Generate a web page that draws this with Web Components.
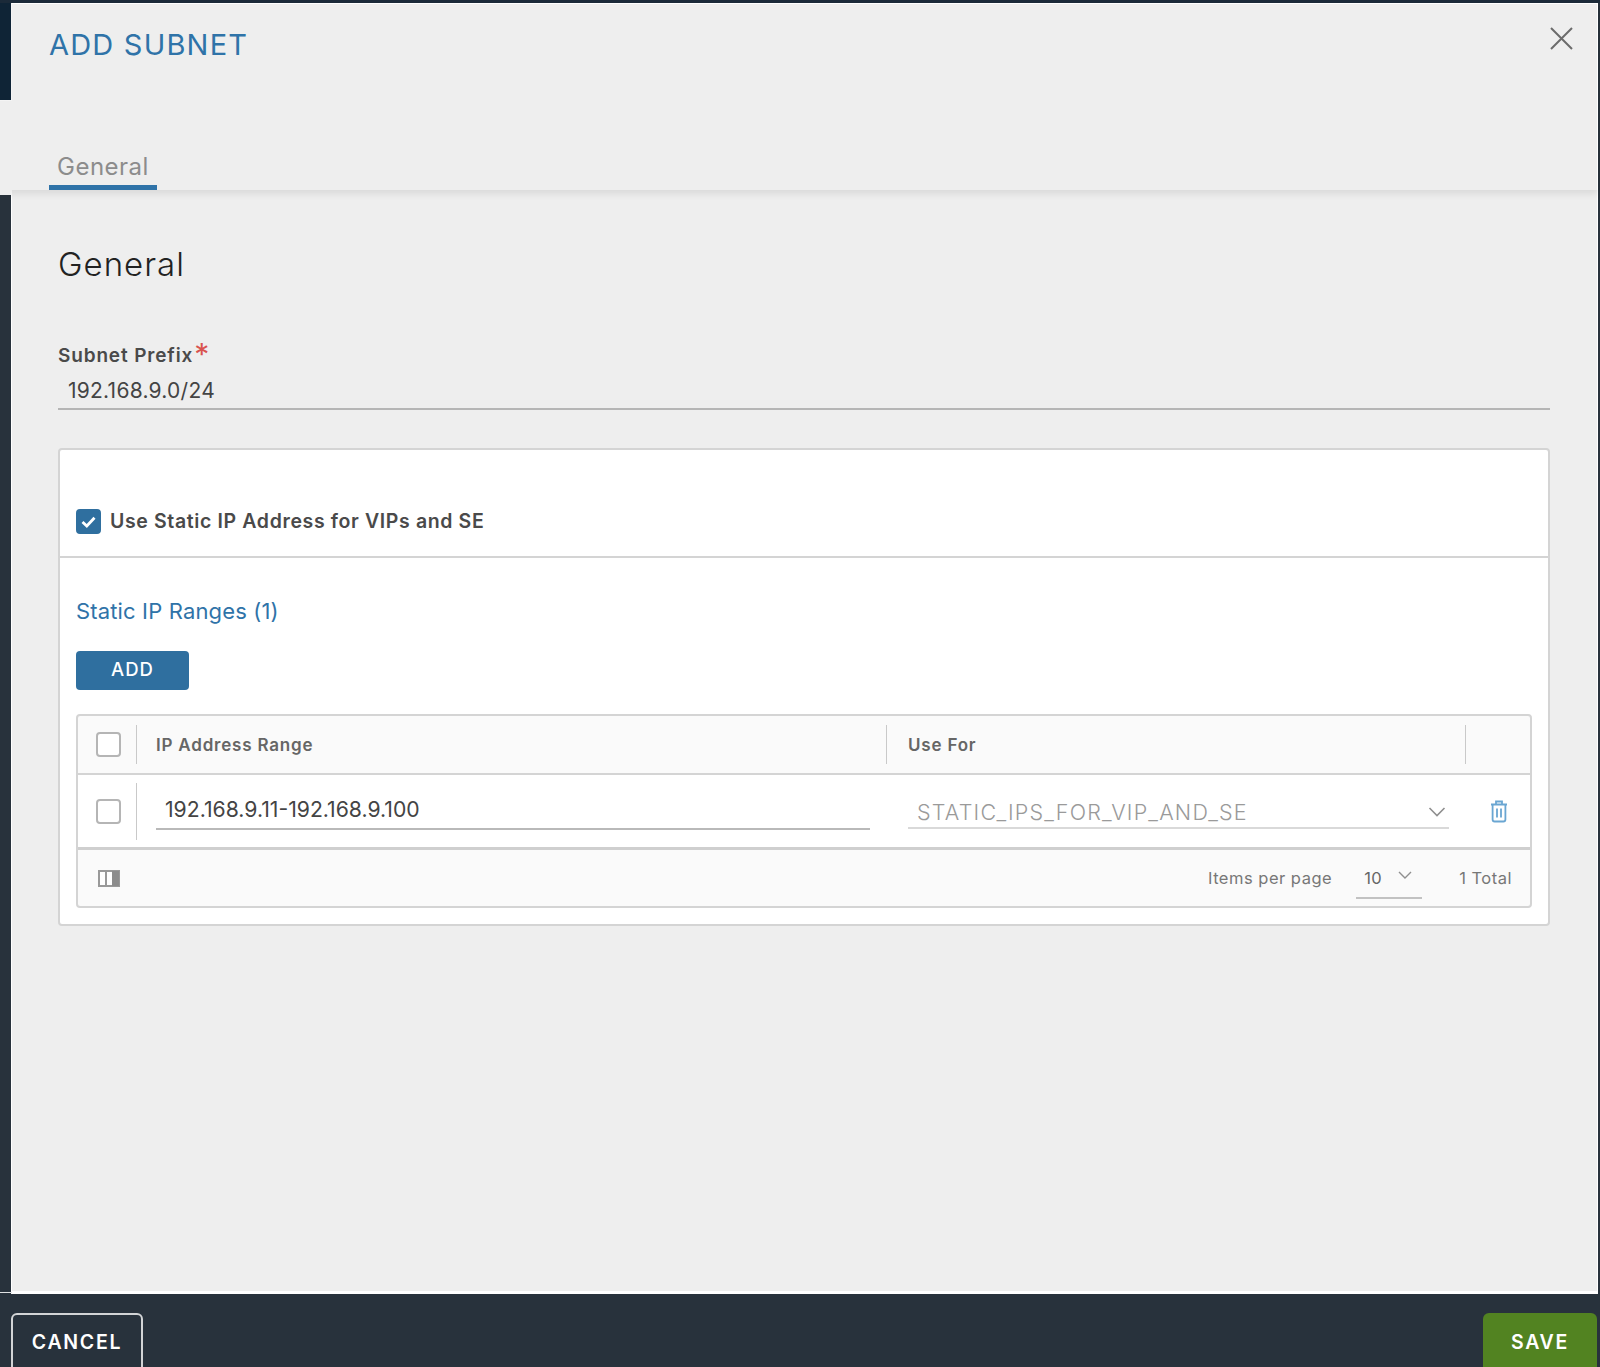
<!DOCTYPE html>
<html>
<head>
<meta charset="utf-8">
<title>Add Subnet</title>
<style>
  html, body { margin: 0; padding: 0; height: 100%; }
  body { font-family: "Inter", "Noto Sans", "Liberation Sans", sans-serif; background: #28323c; overflow: hidden; }
</style>
</head>
<body>
<subnet-modal></subnet-modal>

<script>
class ModalHeader extends HTMLElement {
  constructor() {
    super();
    let shadowRoot = this.attachShadow({mode: 'open'});
    shadowRoot.innerHTML = `
    <style>
      :host { display: block; position: relative; box-sizing: border-box; background: #eee; height: 187px; margin-right: 2px; z-index: 2;
        border-top: 1px solid #fff; border-right: 1px solid #fff;
        box-shadow: 0 3px 8px rgba(0,0,0,.10); font-family: "Inter", "Noto Sans", sans-serif; }
      .rail { position: absolute; left: 0; top: -1px; width: 11px; height: 97px; background: #0f2436; border-right: 1px solid #f4f4f4; border-bottom: 1px solid #f4f4f4; }
      .strip { position: absolute; left: 0; top: 100%; width: 11px; height: 5px; background: #eee; }
      .inner { display: flex; flex-direction: column; height: 100%; box-sizing: border-box; padding: 23px 0 0 49px; }
      .top { display: flex; justify-content: space-between; align-items: flex-start; height: 124px; flex: none; }
      h1 { margin: 0; font-size: 29px; line-height: 36px; font-weight: 400; color: #2f73a8; letter-spacing: 1.2px; }
      .close { margin: 0 24px 0 0; width: 24px; height: 24px; position: relative; top: -1px; }
      .tab { align-self: flex-start; font-size: 24px; line-height: 32px; color: #8c8c8c; letter-spacing: .5px; padding: 0 8px 2px; border-bottom: 5px solid #2f73a8; }
    </style>
    <div class="rail"></div>
    <div class="strip"></div>
    <div class="inner">
      <div class="top">
        <h1>ADD SUBNET</h1>
        <svg class="close" viewBox="0 0 24 24"><path d="M2 2 L23 23 M23 2 L2 23" stroke="#6b6b6b" stroke-width="2" fill="none"/></svg>
      </div>
      <div class="tab">General</div>
    </div>
    `;
  }
}
customElements.define('modal-header', ModalHeader);

class CheckBox extends HTMLElement {
  constructor() {
    super();
    let shadowRoot = this.attachShadow({mode: 'open'});
    let on = this.hasAttribute('checked');
    shadowRoot.innerHTML = `
    <style>
      :host { display: block; width: 25px; height: 25px; flex: none; }
      .box { box-sizing: border-box; width: 25px; height: 25px; border-radius: 4px; display: flex; align-items: center; justify-content: center;
        border: 2px solid ${on ? '#2f6f9f' : '#b5b5b5'}; background: ${on ? '#2f6f9f' : '#fff'}; }
    </style>
    <div class="box">${on ? '<svg width="15" height="12" viewBox="0 0 15 12"><path d="M1.5 6 L5.8 10 L13.5 1.8" stroke="#fff" stroke-width="2.8" fill="none"/></svg>' : ''}</div>
    `;
  }
}
customElements.define('check-box', CheckBox);

class IpTable extends HTMLElement {
  constructor() {
    super();
    let shadowRoot = this.attachShadow({mode: 'open'});
    shadowRoot.innerHTML = `
    <style>
      :host { display: block; border: 2px solid #d4d4d4; border-radius: 4px; background: #fafafa; font-family: "Inter", "Noto Sans", sans-serif; }
      .row { display: grid; grid-template-columns: 58px 750px 579px 1fr; align-items: center; }
      .head { height: 57px; border-bottom: 2px solid #d4d4d4; font-size: 17px; font-weight: 600; color: #666; letter-spacing: .8px; }
      .body { height: 72px; background: #fff; border-bottom: 3px solid #cfcfcf; }
      .cell { height: 100%; display: flex; align-items: center; box-sizing: border-box; position: relative; }
      .chk { justify-content: center; padding-left: 3px; }
      .sep { border-left: 1px solid #c9c9c9; height: 39px; }
      .ipinput { margin-left: 19px; width: 714px; box-sizing: border-box; height: 37px; line-height: 32px; padding-left: 9px; font-size: 21.2px; color: #444; border-bottom: 2px solid #b9b9b9; }
      .select { margin-left: 22px; width: 541px; box-sizing: border-box; height: 36px; padding: 3px 3px 0 9px; display: flex; justify-content: space-between; align-items: center;
        border-bottom: 2px solid #d9d9d9; font-size: 21.5px; font-weight: 300; color: #9a9a9a; letter-spacing: 1.2px; }
      .foot { height: 56px; display: flex; align-items: center; justify-content: space-between; padding: 0 18px 0 20px; font-size: 16.5px; color: #777; letter-spacing: .5px; }
      .right { display: flex; align-items: center; }
      .pp { margin-left: 24px; width: 66px; height: 40px; box-sizing: border-box; border-bottom: 2px solid #c2c2c2; display: flex; align-items: center; justify-content: space-between; padding: 0 10px 0 8px; color: #666; margin-right: 37px; position: relative; top: 1px; }
    </style>
    <div class="row head">
      <div class="cell chk"><check-box></check-box></div>
      <div class="cell"><span class="sep"></span><span style="padding-left:19px">IP Address Range</span></div>
      <div class="cell"><span class="sep"></span><span style="padding-left:21px">Use For</span></div>
      <div class="cell"><span class="sep"></span></div>
    </div>
    <div class="row body">
      <div class="cell chk"><check-box></check-box></div>
      <div class="cell"><span class="sep" style="height:57px"></span><div class="ipinput">192.168.9.11-192.168.9.100</div></div>
      <div class="cell"><div class="select"><span>STATIC_IPS_FOR_VIP_AND_SE</span>
        <svg width="18" height="10" viewBox="0 0 18 10"><path d="M1.5 1 L9 8.5 L16.5 1" stroke="#8f8f8f" stroke-width="1.6" fill="none"/></svg></div></div>
      <div class="cell" style="justify-content:center;padding-left:2px">
        <svg width="18" height="23" viewBox="0 0 18 23" fill="none" stroke="#6aa6d2" stroke-width="1.8"><path d="M1 4.5 H17 M6 4.5 V1.5 H12 V4.5 M2.6 4.5 V19.5 Q2.6 21.5 4.6 21.5 H13.4 Q15.4 21.5 15.4 19.5 V4.5 M7 8.5 V17.5 M11 8.5 V17.5"/></svg>
      </div>
    </div>
    <div class="foot">
      <svg width="22" height="17" viewBox="0 0 22 17"><rect x="1" y="1" width="20" height="15" fill="#fff" stroke="#999" stroke-width="2"/><path d="M8 1 V16" stroke="#999" stroke-width="2"/><rect x="14" y="1" width="7" height="15" fill="#8c8c8c"/></svg>
      <div class="right"><span>Items per page</span>
        <div class="pp"><span>10</span><svg width="14" height="8" viewBox="0 0 14 8" style="position:relative;top:-3px"><path d="M1 1 L7 7 L13 1" stroke="#8f8f8f" stroke-width="1.4" fill="none"/></svg></div>
        <span>1 Total</span></div>
    </div>
    `;
  }
}
customElements.define('ip-table', IpTable);

class GeneralForm extends HTMLElement {
  constructor() {
    super();
    let shadowRoot = this.attachShadow({mode: 'open'});
    shadowRoot.innerHTML = `
    <style>
      :host { display: block; padding: 52px 47px 0 46px; font-family: "Inter", "Noto Sans", sans-serif; color: #444; }
      h2 { margin: 0; font-size: 33px; line-height: 44px; font-weight: 300; color: #222; letter-spacing: 1px; }
      label { display: block; margin-top: 57px; margin-bottom: 2px; font-size: 19px; line-height: 26px; font-weight: 600; color: #4a4a4a; letter-spacing: .85px; }
      label i { font-style: normal; color: #d9534f; font-size: 30px; font-weight: 400; line-height: 10px; position: relative; top: 3px; left: 1px; }
      .input { height: 39px; line-height: 40px; padding-left: 10px; font-size: 21px; color: #444; letter-spacing: .25px; border-bottom: 2px solid #b5b5b5; box-sizing: border-box; }
      .card { margin-top: 38px; background: #fff; border: 2px solid #d4d4d4; border-radius: 4px; }
      .check { height: 108px; box-sizing: border-box; border-bottom: 2px solid #d4d4d4; padding: 59px 16px 0; display: flex; align-items: flex-start; gap: 9px; font-size: 19.5px; font-weight: 600; color: #4a4a4a; line-height: 25px; letter-spacing: .63px; }
      .ranges { padding: 38px 16px 16px; }
      h3 { margin: 0; font-size: 22px; line-height: 30px; font-weight: 400; color: #2f73a8; letter-spacing: .15px; }
      .add { display: block; margin-top: 25px; width: 113px; height: 39px; border: 0; border-radius: 4px; background: #2f6f9f; color: #fff; font: 500 18.5px/36px "Inter", "Noto Sans", sans-serif; letter-spacing: 1px; padding: 0 0 3px; }
      ip-table { margin-top: 24px; }
    </style>
    <h2>General</h2>
    <label>Subnet Prefix<i>*</i></label>
    <div class="input">192.168.9.0/24</div>
    <div class="card">
      <div class="check"><check-box checked></check-box><span>Use Static IP Address for VIPs and SE</span></div>
      <div class="ranges">
        <h3>Static IP Ranges (1)</h3>
        <button class="add">ADD</button>
        <ip-table></ip-table>
      </div>
    </div>
    `;
  }
}
customElements.define('general-form', GeneralForm);

class ModalFooter extends HTMLElement {
  constructor() {
    super();
    let shadowRoot = this.attachShadow({mode: 'open'});
    shadowRoot.innerHTML = `
    <style>
      :host { display: flex; justify-content: space-between; align-items: flex-start; height: 73px; box-sizing: border-box; padding: 19px 3px 0 11px; background: #28323c; overflow: hidden; font-family: "Inter", "Noto Sans", sans-serif; }
      button { height: 70px; border-radius: 6px; font: 600 19.5px/1 "Inter", "Noto Sans", sans-serif; letter-spacing: 1.7px; color: #fff; padding: 0 0 10px; }
      .cancel { width: 132px; background: transparent; border: 2px solid #d2d4d6; }
      .save { width: 114px; background: #528321; border: 0; }
    </style>
    <button class="cancel">CANCEL</button>
    <button class="save">SAVE</button>
    `;
  }
}
customElements.define('modal-footer', ModalFooter);

class SubnetModal extends HTMLElement {
  constructor() {
    super();
    let shadowRoot = this.attachShadow({mode: 'open'});
    shadowRoot.innerHTML = `
    <style>
      :host { display: flex; flex-direction: column; height: 1367px; width: 1600px; overflow: hidden; background: #28323c; }
      .topline { height: 3px; background: #1c2b3a; flex: none; }
      .wrap { position: relative; height: 1101px; margin-left: 11px; margin-right: 2px; flex: none; background: #eee; border-left: 1px solid #fff; border-right: 1px solid #fff; border-bottom: 3px solid #fff; }
      .wrap::after { content: ""; position: absolute; left: -12px; bottom: -2px; width: 12px; height: 1px; background: #dfe1e3; }
      modal-header { flex: none; }
      modal-footer { flex: none; }
    </style>
    <div class="topline"></div>
    <modal-header></modal-header>
    <div class="wrap"><general-form></general-form></div>
    <modal-footer></modal-footer>
    `;
  }
}
customElements.define('subnet-modal', SubnetModal);
</script>
</body>
</html>
